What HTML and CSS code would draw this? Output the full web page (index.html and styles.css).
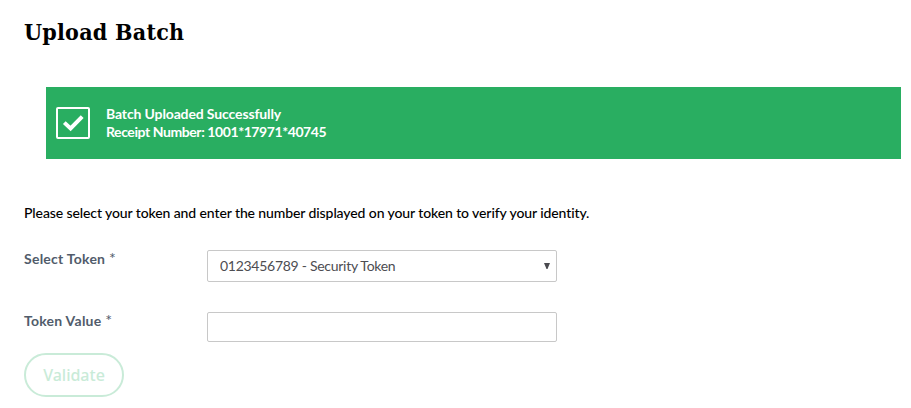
FILE: index.html
```html
<!DOCTYPE html>
<html lang="en">

<head>
    <meta charset="UTF-8">
    <title>Upload Batch</title>
    <link rel="stylesheet" href="styles.css">
</head>

<body>
    <h1>Upload Batch</h1>

    <div class="alert">
        <svg class="alert-icon" width="34" height="32" viewBox="0 0 34 32">
            <rect x="1" y="1" width="32" height="30" rx="1" fill="none" stroke="#fff" stroke-width="2" />
            <path d="M8.3 15.6L14.6 21.4L26.2 9.7" fill="none" stroke="#fff" stroke-width="4" />
        </svg>
        <div class="alert-text">
            <div><span class="alert-title">Batch Uploaded Successfully</span></div>
            <div><span class="alert-receipt">Receipt Number: 1001*17971*40745</span></div>
        </div>
    </div>

    <p class="intro">Please select your token and enter the number displayed on your token to verify your identity.</p>

    <form>
        <div class="form-row">
            <label for="token">Select Token <span class="required">*</span></label>
            <div class="select-wrap">
                <select id="token" class="field">
                    <option>0123456789 - Security Token</option>
                </select>
                <svg class="arrow" width="6" height="6" viewBox="0 0 6 6">
                    <path d="M0 0H6L3.5 6H2.5Z" fill="#4a4a4f" />
                </svg>
            </div>
        </div>
        <div class="form-row value-row">
            <label for="tokenValue">Token Value <span class="required">*</span></label>
            <input type="text" id="tokenValue" class="field">
        </div>
        <button type="submit" class="button" disabled>Validate</button>
    </form>
</body>

</html>
```

FILE: styles.css
```css
* {
    box-sizing: border-box;
}

body {
    margin: 0;
    padding: 16px 10px 0 24px;
    font-family: Lato, Arial, sans-serif;
    font-size: 14px;
    color: #000;
    background-color: #fff;
}

h1 {
    margin: 0 0 39px;
    font-family: "DejaVu Serif", Georgia, serif;
    font-stretch: condensed;
    font-size: 23px;
    font-weight: bold;
    line-height: 32px;
    letter-spacing: 0.25px;
}

.alert {
    display: flex;
    align-items: center;
    height: 72px;
    margin-left: 22px;
    padding-left: 10px;
    color: #fff;
    background-color: #29ae61;
}

.alert-text {
    margin-left: 16px;
    font-weight: bold;
    line-height: 18px;
}

.alert-title {
    letter-spacing: -0.13px;
}

.alert-receipt {
    letter-spacing: -0.42px;
}

.intro {
    margin: 44px 0 27px;
    font-weight: 500;
    line-height: 20px;
    letter-spacing: -0.1px;
}

.form-row {
    display: flex;
    height: 32px;
    margin-bottom: 30px;
}

.value-row {
    height: 30px;
    margin-bottom: 11px;
}

label {
    width: 183px;
    color: #515c6b;
    font-weight: bold;
    line-height: 18px;
    letter-spacing: 0.25px;
}

.required {
    font-size: 16px;
    font-weight: normal;
    line-height: 1;
}

.select-wrap {
    position: relative;
}

.field {
    width: 350px;
    height: 100%;
    padding: 0 12px 1px;
    border: 1px solid #c8c8c8;
    border-radius: 2px;
    background-color: #fff;
    color: #4d4d52;
    font-family: inherit;
    font-size: 14px;
    letter-spacing: -0.28px;
    appearance: none;
}

.arrow {
    position: absolute;
    top: 13px;
    right: 7px;
    pointer-events: none;
}

.button {
    display: block;
    width: 100px;
    height: 44px;
    padding: 0;
    border: 2px solid #c9ebd8;
    border-radius: 22px;
    background-color: #fff;
    color: #c9ebd8;
    font-family: "Noto Sans", Arial, sans-serif;
    font-size: 16px;
    font-weight: 500;
}
```
